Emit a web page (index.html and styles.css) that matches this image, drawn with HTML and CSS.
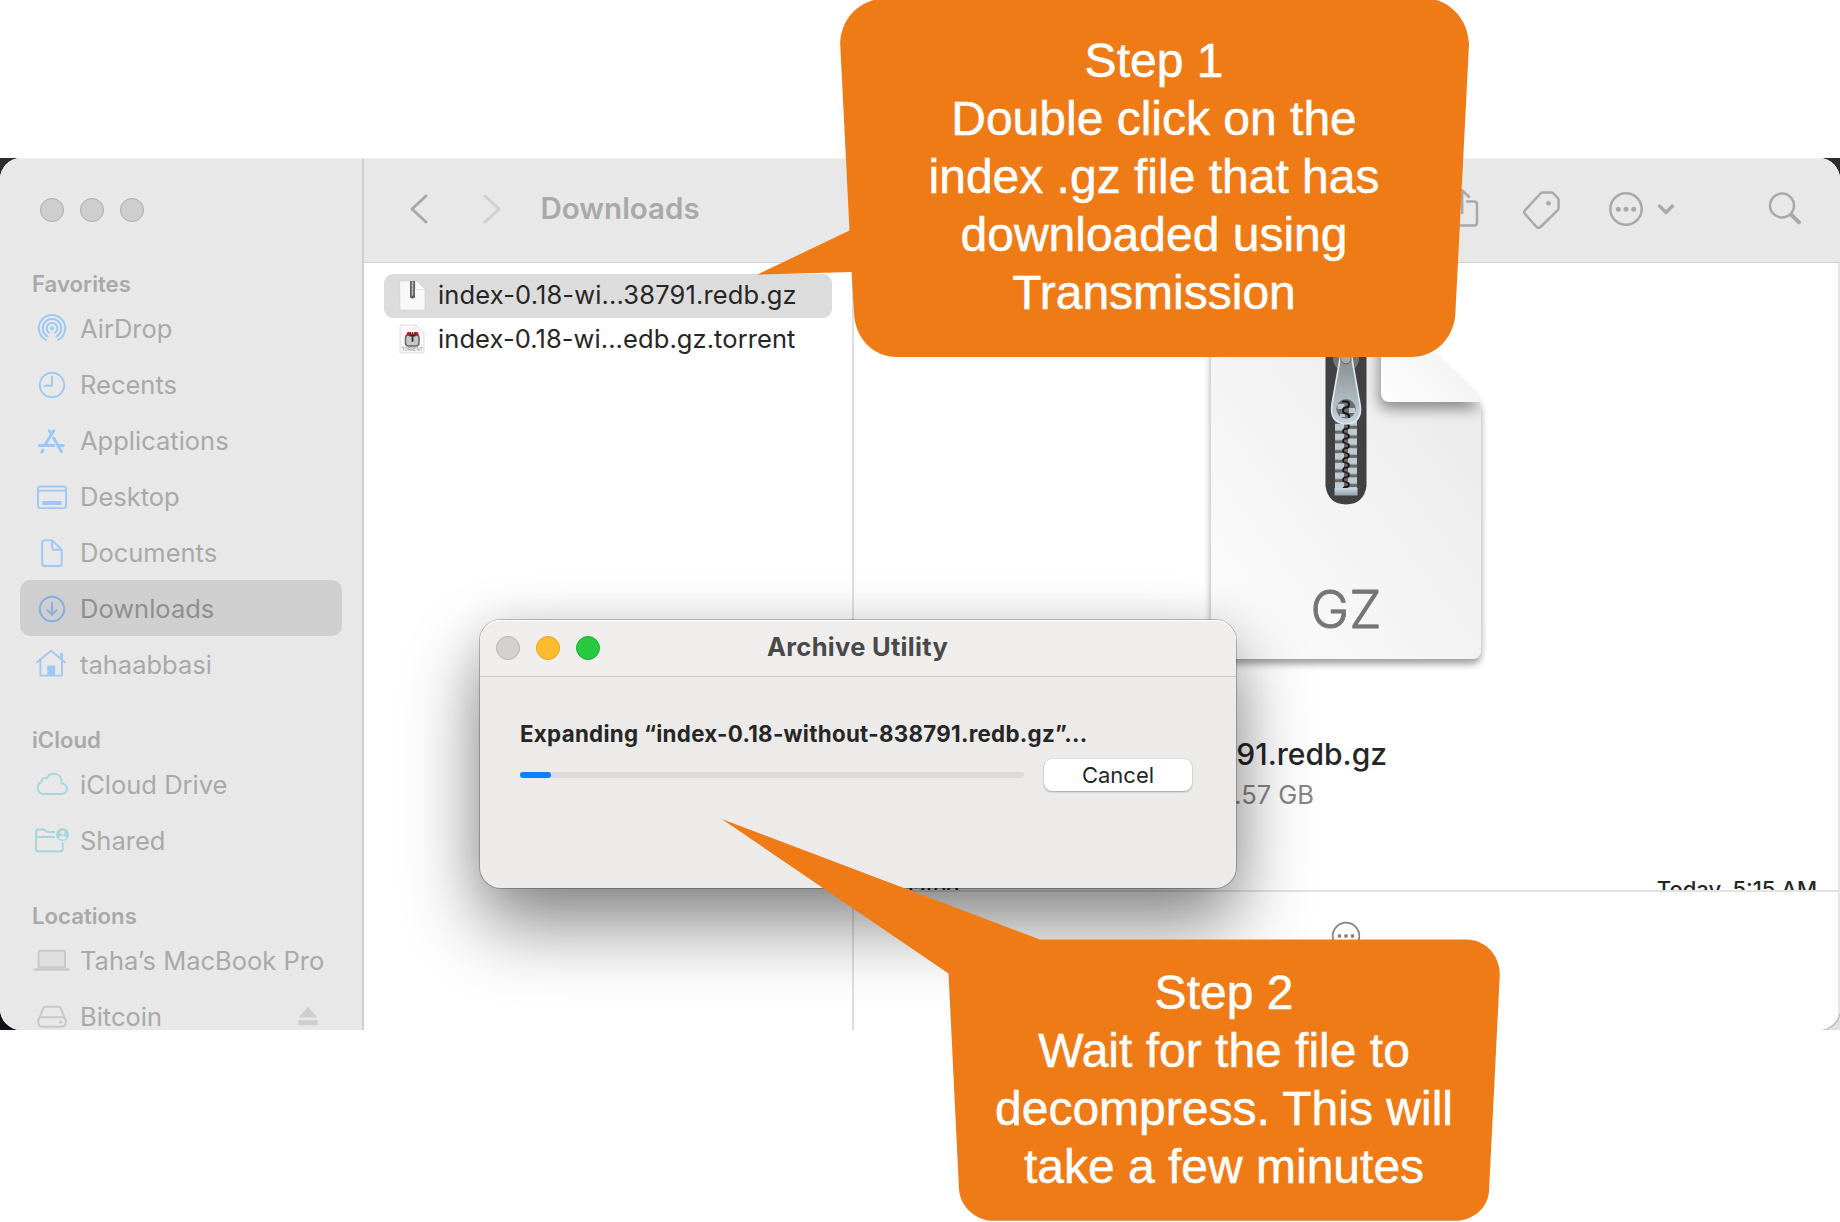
FILE: index.html
```html
<!DOCTYPE html>
<html lang="en">
<head>
<meta charset="utf-8">
<title>Downloads</title>
<link rel="stylesheet" href="styles.css">
</head>
<body>
<main class="stage">
  <div class="desktop">
  <section class="finder">
    <nav class="sidebar">
      <div class="lights"><i></i><i></i><i></i></div>
      <h2>Favorites</h2>
      <ul>
        <li><svg viewBox="0 0 36 36"><path d="M12 30A13.2 13.2 0 1 1 24 30M13.6 26.5A9.3 9.3 0 1 1 22.4 26.5M15 22.8A5.4 5.4 0 1 1 21 22.8"/><circle class="solid" cx="18" cy="18.3" r="2"/></svg><span>AirDrop</span></li>
        <li><svg viewBox="0 0 36 36"><circle cx="18" cy="19" r="12.2"/><path d="M18 10.8V19.8H10.6"/></svg><span>Recents</span></li>
        <li><svg viewBox="0 0 36 36"><path class="thick" d="M5.4 23.4H19.8M25.4 23.4H29.3M19.8 8.8L11.2 22.6M15.2 8.8L17.3 12M19.6 16L27.4 29.4M9 28.2L7.8 30"/></svg><span>Applications</span></li>
        <li><svg viewBox="0 0 36 36"><rect x="3.9" y="8.5" width="28.2" height="21.6" rx="2.5"/><path d="M4 12.6H32"/><rect class="solid" x="8.3" y="23" width="19.4" height="4" rx="1"/></svg><span>Desktop</span></li>
        <li><svg viewBox="0 0 36 36"><path d="M10.2 6.4H18.2L27.7 15.8V29.6Q27.7 32 25.3 32H10.6Q8.2 32 8.2 29.6V8.6Q8.2 6.4 10.2 6.4ZM18.2 6.4V14.4Q18.2 15.8 19.6 15.8H27.7"/></svg><span>Documents</span></li>
        <li class="current"><svg viewBox="0 0 36 36"><circle cx="18" cy="19" r="12.2"/><path d="M18 13V24.6M13.4 20.2L18 24.8L22.6 20.2"/></svg><span>Downloads</span></li>
        <li><svg viewBox="0 0 36 36"><path d="M3 16.2L17 4.8L31 16.2M6.4 14V29.6H28V8M27 12.5V7.8"/><path class="solid" d="M13.3 19.5h7.8V30h-7.8z"/></svg><span>tahaabbasi</span></li>
      </ul>
      <h2>iCloud</h2>
      <ul class="teal">
        <li><svg viewBox="0 0 36 36"><path d="M9.4 28A6.2 6.2 0 0 1 7.3 16.2C7 13.2 10 11 13 12.2C15.6 6.2 25 6.4 27 12.6C28 15 27.4 16.8 27.6 17.4C34.6 18.2 34.8 28 27.4 28Z"/></svg><span>iCloud Drive</span></li>
        <li><svg viewBox="0 0 36 36"><path d="M28.7 21.5V27Q28.7 29.2 26.5 29.2H4.2Q2 29.2 2 27V9.7Q2 7.5 4.2 7.5H9.2Q10.4 7.5 11.4 8.5L12.4 9.4Q13 10 14.2 10H20.2M2 15H20.2"/><circle class="solid" cx="28.6" cy="12.5" r="6.5"/><circle class="cut" cx="28.6" cy="10.6" r="2"/><path class="cut" d="M24.8 16.4Q25.4 13.6 28.6 13.6T32.4 16.4Q30.9 17.6 28.6 17.6T24.8 16.4Z"/></svg><span>Shared</span></li>
      </ul>
      <h2>Locations</h2>
      <ul class="gray">
        <li><svg viewBox="0 0 36 36"><path class="tint" d="M4.600 25.5V10.6Q4.600 8.8 6.400 8.8H29.2Q31 8.8 31 10.6V25.5Z"/><path class="thick" d="M.5 27.6H34.500"/></svg><span>Taha’s MacBook Pro</span></li>
        <li><svg viewBox="0 0 36 36"><path d="M4 23.6L9 10.4Q9.8 8.7 11.6 8.7H24.4Q26.2 8.7 27 10.4L32 23.6M8 19.2H28Q32 19.2 32 23.6T28 28.8H8Q4 28.8 4 23.6T8 19.2Z"/><circle class="solid" cx="26.8" cy="24.2" r="1.6"/></svg><span>Bitcoin</span><svg class="eject" viewBox="0 0 20 20"><path d="M10 0L19.5 10.6H.5ZM.5 13.2h19v5H.5z"/></svg></li>
      </ul>
    </nav>
    <div class="content">
      <header class="toolbar">
        <svg class="back" viewBox="0 0 20 32"><path d="M17 3L3 16L17 29"/></svg>
        <svg class="forward" viewBox="0 0 20 32"><path d="M3 3L17 16L3 29"/></svg>
        <h1>Downloads</h1>
        <div class="actions">
          <svg class="share" viewBox="0 0 36 44"><path d="M13 14.5H6.5Q3.5 14.5 3.5 17.5V35.5Q3.5 38.5 6.5 38.5H30Q33 38.5 33 35.5V17.5Q33 14.5 30 14.5H23M18.2 26V4M11 10.5L18.2 3.5L25.2 10"/></svg>
          <svg class="tag" viewBox="0 0 40 40"><path d="M20.5 3.5H29.6Q30.500 3.500 31.300 4.300L35.300 8.300Q36.600 9.600 36.600 11.400V18.500Q36.600 20.300 35.300 21.600L18.500 38Q16.500 39.500 14.600 38L3 25Q1.300 23.300 3 21.300L18 5Q19.200 3.500 20.500 3.500Z"/><circle class="dot" cx="26.500" cy="14.300" r="2.400"/></svg>
          <svg class="more" viewBox="0 0 36 36"><circle cx="18" cy="18" r="15.700"/><g class="dot"><circle cx="10.300" cy="18.300" r="2.500"/><circle cx="18" cy="18.300" r="2.500"/><circle cx="25.700" cy="18.300" r="2.500"/></g></svg>
          <svg class="caret" viewBox="0 0 20 12"><path d="M3.500 3L10 9.500L16.500 3"/></svg>
          <svg class="search" viewBox="0 0 38 38"><circle cx="16" cy="15.500" r="12"/><path class="handle" d="M25.500 25L33 32.300"/></svg>
        </div>
      </header>
      <div class="columns">
        <div class="files">
          <div class="file selected">
            <svg viewBox="0 0 28 32"><path class="sheet" d="M2 1H18L27 10V29Q27 30 26 30H3Q2 30 2 29Z"/><path class="fold" d="M18 1V9.500H27Z"/><path d="M12 1h5v16.500q-2.500 2-5 0z" fill="#5d6066"/><path d="M14.500 2V15" stroke="#b9c2c8" stroke-width="1.600" stroke-dasharray="2 1"/></svg>
            <span class="gz">index-0.18-wi...38791.redb.gz</span>
          </div>
          <div class="file">
            <svg viewBox="0 0 28 32"><path class="sheet" d="M2.500 1H18L26 9V29H2.500Z"/><path class="fold" d="M17 1V9H26Z"/><rect x="7.500" y="11" width="13.500" height="11" rx="3" fill="#c7c7c9" stroke="#67676b" stroke-width="1.500"/><path d="M8 11.500L9.500 8H13V11.500ZM16 11.500V8H19.500L21 11.500Z" fill="#c5161d"/><path d="M14.500 9V17M12 11.500H17" stroke="#333" stroke-width="1.800"/><text x="14.300" y="27" text-anchor="middle">TORRENT</text></svg>
            <span class="torrent">index-0.18-wi...edb.gz.torrent</span>
          </div>
        </div>
        <aside class="preview">
          <div class="info">
            <svg class="bigicon" viewBox="0 0 300 400">
              <defs>
                <linearGradient id="sheet" x1="1" y1="0" x2="0" y2="1"><stop offset="0" stop-color="#e8e8e8"/><stop offset="1" stop-color="#fdfdfd"/></linearGradient>
                <linearGradient id="flap" x1="0" y1="1" x2=".7" y2=".3"><stop offset="0" stop-color="#fff"/><stop offset="1" stop-color="#f0f0f0"/></linearGradient>
                <linearGradient id="pull" x1="0" y1="0" x2="0" y2="1"><stop offset="0" stop-color="#858a8d"/><stop offset="1" stop-color="#c5d4dd"/></linearGradient>
                <linearGradient id="metal" x1="0" y1="0" x2="0" y2="1"><stop offset="0" stop-color="#c9dae2"/><stop offset="1" stop-color="#95a1a7"/></linearGradient>
                <filter id="drop" x="-10%" y="-10%" width="120%" height="120%"><feDropShadow dx="0" dy="5" stdDeviation="3.500" flood-opacity=".38"/></filter>
                <filter id="soft" x="-30%" y="-30%" width="160%" height="170%"><feDropShadow dx="-2" dy="7" stdDeviation="7" flood-opacity=".42"/></filter>
                <clipPath id="page"><path d="M15 0H180L276 94Q285 103 285 114V353Q285 363 275 363H15Z"/></clipPath>
                <pattern id="teeth" x="139" y="128" width="22" height="9.700" patternUnits="userSpaceOnUse"><rect width="22" height="9.700" fill="#6a6764"/><rect width="9" height="6.500" fill="#bdccd4"/><rect x="13" y="-4.900" width="9" height="6.500" fill="#bdccd4"/><rect x="13" y="4.800" width="9" height="6.500" fill="#bdccd4"/><path d="M11 0q3 0 3 2.400t-3 2.400q-3 0-3 2.400t3 2.500" fill="none" stroke="#151515" stroke-width="1.700"/></pattern>
              </defs>
              <path filter="url(#drop)" fill="url(#sheet)" d="M15 0H180L276 94Q285 103 285 114V353Q285 363 275 363H15Z"/>
              <g clip-path="url(#page)"><path filter="url(#soft)" fill="url(#flap)" d="M185 -10V96Q185 106 195 106H288L180 -4Z"/></g>
              <path d="M129.500 40H170.500V190Q168 208 150 208.500Q132 208 129.500 190Z" fill="#414143"/>
              <rect x="139" y="100" width="22" height="92" fill="url(#teeth)"/>
              <rect x="138.500" y="192" width="23" height="7.500" fill="url(#metal)"/>
              <path d="M137 55H163V63Q163 68 159 72H141Q137 68 137 63Z" fill="#77736e"/>
              <path d="M144.500 60L136 108Q133 127 150 128Q167 127 164 108L155.500 60Z" fill="url(#pull)" stroke="#dfe9ef" stroke-width="1.600"/>
              <circle cx="150" cy="112.800" r="9.700" fill="#6c6f72"/>
              <path d="M141.500 108h7v5h-7zM153 112h6v5h-6zM144 118h5v3h-5z" fill="#bdccd4"/>
              <path d="M147 105.500h3q3 0 3 3t-3 3q-3 0-3 3t3 3q3 0 3 3.500" fill="none" stroke="#151515" stroke-width="2"/>
              <path d="M145 65q5 6 10 0v-8h-10z" fill="#a5a9ab" stroke="#555" stroke-width=".8"/>
              <text x="150" y="331.500" text-anchor="middle" class="ext">GZ</text>
            </svg>
            <p class="name">91.redb.gz</p>
            <p class="meta">.57 GB</p>
            <div class="row"><span>Created</span><span class="when">Today, 5:15 AM</span></div>
          </div>
          <footer><svg viewBox="0 0 32 32"><circle cx="16" cy="16" r="13.300"/><g class="dot"><circle cx="9.500" cy="16" r="1.900"/><circle cx="16" cy="16" r="1.900"/><circle cx="22.500" cy="16" r="1.900"/></g></svg></footer>
        </aside>
      </div>
    </div>
  </section>
  <section class="dialog">
    <header><div class="lights"><i></i><i class="min"></i><i class="max"></i></div><h3>Archive Utility</h3></header>
    <div class="body">
      <p>Expanding “index-0.18-without-838791.redb.gz”...</p>
      <div class="progress-row"><div class="track"><b style="width:31px"></b></div><button>Cancel</button></div>
    </div>
  </section>
  </div>
  <svg class="bubbles" viewBox="0 0 1840 1222">
    <path d="M840.200 44C841 20 856 4 877 -1H1433C1454 4 1468 22 1469 44L1455.300 315C1453 339 1435 357 1411 357H897C873 357 855 338 854 313L851.500 272L757 274.700L849.500 230.500Z"/>
    <path d="M721.700 819L1040 939.600H1466C1485 939.600 1500 955 1499.800 975L1489 1191C1488 1208 1473 1220.800 1455 1220.800H993.500C975 1220.800 960 1206 959 1189L948.500 973.500Z"/>
  </svg>
  <p class="step one">Step 1<br>Double click on the<br>index .gz file that has<br>downloaded using<br>Transmission</p>
  <p class="step two">Step 2<br>Wait for the file to<br>decompress. This will<br>take a few minutes</p>
</main>
</body>
</html>
```
FILE: styles.css
```css
* { box-sizing: border-box; margin: 0; padding: 0; }
body { background: #fff; font-family: Inter, "Liberation Sans", sans-serif; color: #262626; }
.stage { position: relative; width: 1840px; height: 1222px; padding-top: 158px; overflow: hidden; }
.desktop { position: relative; height: 872px; overflow: hidden; background: linear-gradient(#2d2d2d 50%, #10121a 50%); }
.desktop::after { content: ""; position: absolute; right: 0; bottom: 0; width: 24px; height: 24px; background: #e2e2e2; }
.finder { position: relative; z-index: 1; display: flex; height: 100%; border-radius: 21px; overflow: hidden; background: #fff; box-shadow: 0 0 1px 1px rgba(0,0,0,.25); }
svg { display: block; fill: none; flex: none; stroke-linecap: round; stroke-linejoin: round; }
ul { list-style: none; }

.sidebar { width: 364px; flex: none; padding: 40px 22px 0 20px; background: #e8e8e8; border-right: 2px solid #d0d0d0; border-top: 1px solid #f0f0f0; }
.lights { display: flex; gap: 16px; }
.lights i { width: 24px; height: 24px; border-radius: 50%; background: #cecece; border: 1px solid #acacac; }
.sidebar .lights { padding-left: 20px; margin-top: -1px; }
.sidebar h2 { height: 32px; margin-top: 32px; padding-left: 12px; font-size: 22.200px; line-height: 31px; font-weight: 600; color: #a9a9a9; }
.sidebar .lights + h2 { margin-top: 46px; }
.sidebar li { display: flex; align-items: center; width: 322px; height: 56px; padding-left: 14px; border-radius: 10px; font-size: 25.500px; color: #a9a9a9; white-space: nowrap; }
.sidebar li svg { width: 36px; height: 36px; margin-right: 10px; stroke: #9cc8f5; stroke-width: 1.900; overflow: visible; }
.sidebar .solid { fill: #9cc8f5; stroke: none; }
.sidebar .thick { stroke-width: 3; }
.sidebar .teal svg { stroke: #a5d6dd; }
.sidebar .teal .solid { fill: #a5d6dd; }
.sidebar .teal .cut { fill: #e8e8e8; stroke: none; }
.sidebar .gray svg { stroke: #c8c8c8; }
.sidebar .gray .solid { fill: #c8c8c8; }
.sidebar .gray .thick { stroke-width: 2.500; }
.sidebar .tint { fill: #dedede; }
.sidebar .current { background: #cfcfcf; color: #8f8f8f; }
.sidebar .current svg { stroke: #7eaee2; }
.sidebar li .eject { width: 20px; height: 20px; margin: 1px 24px 0 auto; fill: #cdcdcd; stroke: none; }

.content { flex: 1; min-width: 0; display: flex; flex-direction: column; }
.toolbar { height: 105px; flex: none; display: flex; align-items: center; padding: 0 36px 3px 45px; background: #e8e8e8; border-bottom: 1px solid #d2d2d2; border-top: 1px solid #f0f0f0; }
.toolbar svg { stroke: #a9a9a9; stroke-width: 2.500; }
.toolbar .back, .toolbar .forward { width: 20px; height: 32px; stroke-width: 3; }
.toolbar .forward { margin-left: 53px; stroke: #cfcfcf; }
.toolbar h1 { margin: 0 0 2px 38.500px; font-size: 29.500px; line-height: 36px; font-weight: 600; color: #a9a9a9; }
.actions { display: flex; align-items: center; margin-left: auto; }
.dot { fill: #a9a9a9; stroke: none; }
.share { width: 36px; height: 44px; }
.tag { width: 40px; height: 40px; margin-left: 42px; }
.more { width: 36px; height: 36px; margin-left: 46px; }
.caret { width: 20px; height: 12px; margin-left: 12px; }
.toolbar .caret { stroke-width: 3.500; }
.search { width: 38px; height: 38px; margin-left: 90px; }
.search .handle { stroke-width: 4; }

.columns { flex: 1; display: flex; min-height: 0; border-right: 2px solid #e5e5e5; }
.files { width: 490px; flex: none; padding: 11px 20px 0; border-right: 2px solid #e0e0e0; }
.file { display: flex; align-items: center; width: 448px; height: 44px; padding-left: 14px; border-radius: 9px; font-size: 25.500px; line-height: 30px; white-space: nowrap; }
.file span { margin-bottom: 2px; }
.file .gz { letter-spacing: .14px; }
.file .torrent { letter-spacing: .08px; }
.file.selected { background: #dcdcdc; }
.file svg { width: 28px; height: 32px; margin-right: 12px; }
.file text { font-size: 4.500px; fill: #888; }
.sheet { fill: #f8f8f8; stroke: #d3d3d3; stroke-width: .7; }
.fold { fill: #fff; stroke: #d8d8d8; stroke-width: .6; }

.preview { flex: 1; display: flex; flex-direction: column; }
.info { position: relative; height: 627px; overflow: hidden; }
.bigicon { width: 300px; height: 400px; margin: 33px 0 0 342px; }
.ext { font-size: 52px; font-weight: 300; fill: #757575; stroke: #757575; stroke-width: .8; }
.name { width: 533px; margin-top: 38px; font-size: 30px; line-height: 40px; font-weight: 500; text-align: right; white-space: nowrap; }
.meta { width: 460px; margin-top: 4px; font-size: 25.500px; line-height: 34px; color: #868686; text-align: right; white-space: nowrap; }
.row { display: flex; justify-content: space-between; margin-top: 62px; padding: 0 21px 0 22px; font-size: 22px; line-height: 30px; font-weight: 500; }
.preview footer { flex: 1; padding: 28px 0 0 476px; border-top: 2px solid #e3e3e3; }
.preview footer svg { width: 32px; height: 32px; stroke: #858585; stroke-width: 1.800; }
.preview footer .dot { fill: #858585; }

.dialog { position: absolute; z-index: 2; left: 480px; top: 462px; width: 756px; height: 268px; border-radius: 21px; background: #ecebe9; box-shadow: 0 0 0 1px rgba(0,0,0,.24), inset 0 1px 0 #fff, 0 36px 76px rgba(0,0,0,.48), 0 0 40px rgba(0,0,0,.08); }
.dialog header { display: flex; align-items: center; height: 57px; padding: 0 16px; border-bottom: 1px solid #c9c8c6; border-radius: 21px 21px 0 0; background: #efeeec; box-shadow: inset 0 1px 0 #fff; }
.dialog .lights { width: 104px; }
.dialog .lights i { background: #d3d2d0; border-color: #b7b6b4; }
.dialog .lights .min { background: #febc2e; border-color: #e1a325; }
.dialog .lights .max { background: #28c840; border-color: #1fac31; }
.dialog h3 { flex: 1; margin: 0 105px 2px 0; text-align: center; font-size: 25.500px; line-height: 30px; font-weight: 700; letter-spacing: .3px; color: #494949; }
.dialog .body { padding: 42px 43px 0 40px; }
.dialog p { font-size: 22.300px; line-height: 30px; font-weight: 700; letter-spacing: .3px; white-space: nowrap; }
.progress-row { display: flex; align-items: center; gap: 20px; margin-top: 10px; }
.track { width: 504px; height: 6px; margin-top: -1px; border-radius: 3px; background: #dddcda; }
.track b { display: block; height: 6px; border-radius: 3px; background: #0a7fff; }
button { width: 148px; height: 32px; border: 0; border-radius: 8px; background: #fff; color: #262626; font: 400 22px/32px Inter, sans-serif; box-shadow: 0 1px 2px rgba(0,0,0,.3), 0 0 1px rgba(0,0,0,.2); }

.bubbles { position: absolute; z-index: 3; inset: 0; width: 1840px; height: 1222px; fill: #ef7b17; }
.step { position: absolute; z-index: 4; text-align: center; white-space: nowrap; color: #fff; font: 48px/58px "Liberation Sans", Arial, sans-serif; -webkit-text-stroke: .5px #fff; }
.one { left: 854px; top: 32px; width: 600px; }
.two { left: 924px; top: 964px; width: 600px; }
```
